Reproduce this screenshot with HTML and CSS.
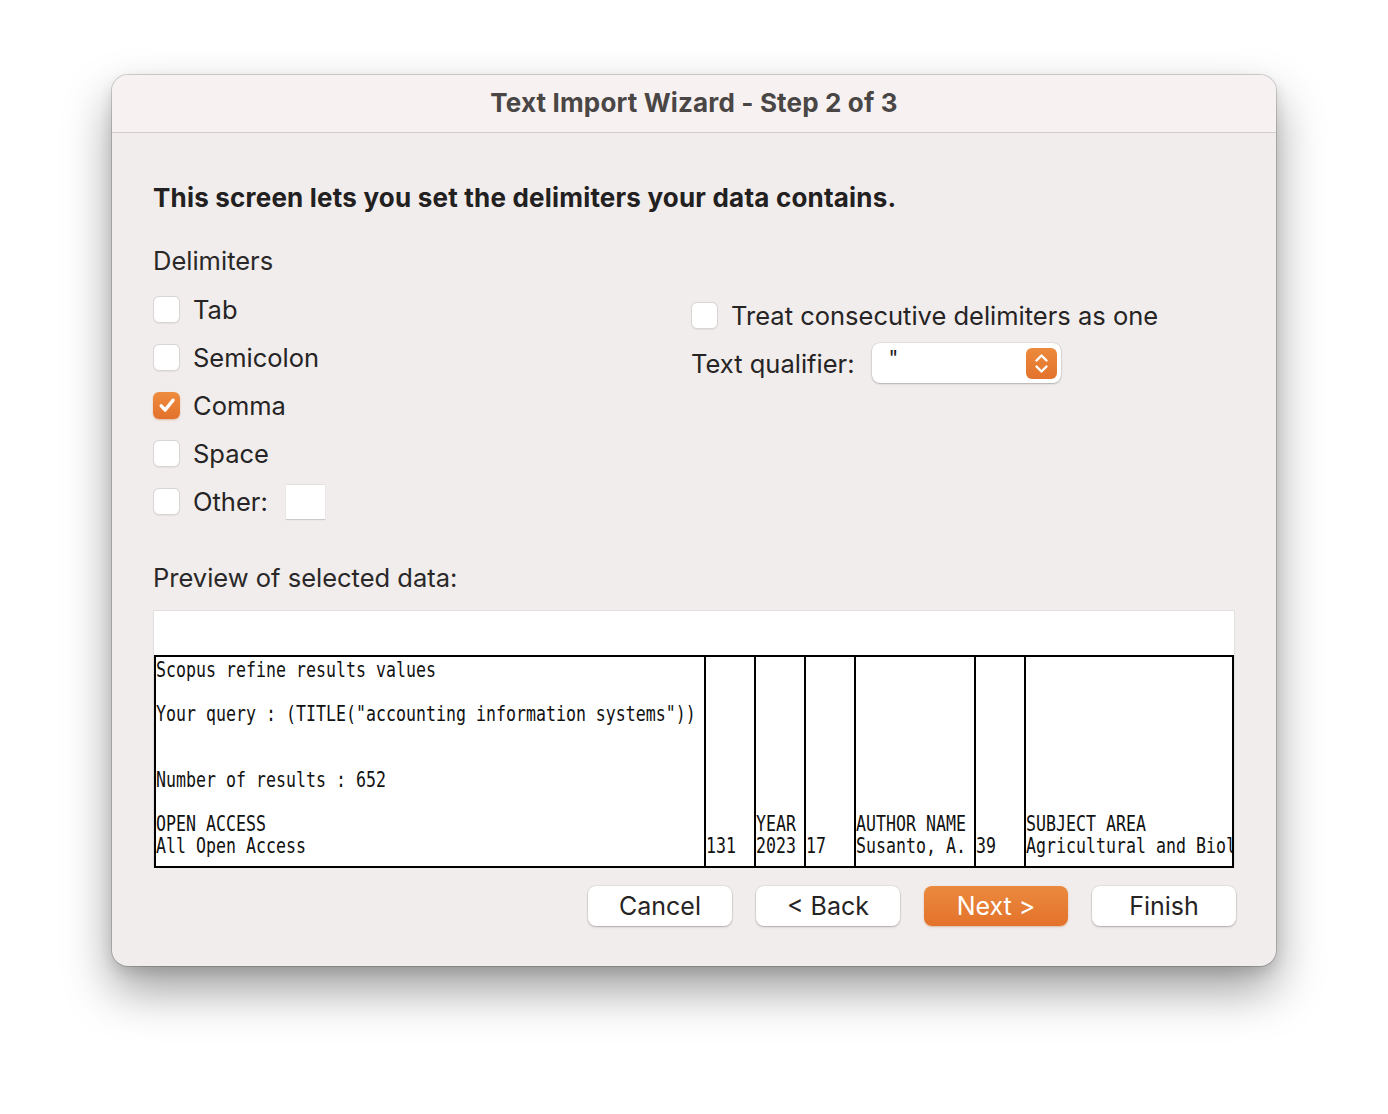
FILE: index.html
```html
<!DOCTYPE html>
<html>
<head>
<meta charset="utf-8">
<link rel="stylesheet" href="styles.css">
</head>
<body>
<div class="window">
  <div class="titlebar">Text Import Wizard - Step 2 of 3</div>
  <div class="content">
    <div class="heading">This screen lets you set the delimiters your data contains.</div>
    <div class="section-label">Delimiters</div>
    <div class="options">
      <div class="col-left">
        <div class="row"><span class="check"></span><span class="label">Tab</span></div>
        <div class="row"><span class="check"></span><span class="label">Semicolon</span></div>
        <div class="row"><span class="check checked"><svg viewBox="0 0 26 26" width="26" height="26"><path d="M7.2 13.8 L11.2 18 L19 8.2" fill="none" stroke="#fff" stroke-width="3.4" stroke-linecap="round" stroke-linejoin="round"/></svg></span><span class="label">Comma</span></div>
        <div class="row"><span class="check"></span><span class="label">Space</span></div>
        <div class="row"><span class="check"></span><span class="label">Other:</span><span class="other-input"></span></div>
      </div>
      <div class="col-right">
        <div class="row"><span class="check"></span><span class="label">Treat consecutive delimiters as one</span></div>
        <div class="row"><span class="qual-label">Text qualifier:</span>
          <span class="select"><span class="select-value">"</span><span class="stepper"><svg viewBox="0 0 31 31" width="31" height="31"><path d="M10.5 12.5 L15.5 7.5 L20.5 12.5 M10.5 18.5 L15.5 23.5 L20.5 18.5" fill="none" stroke="#fff" stroke-width="2.4" stroke-linecap="round" stroke-linejoin="round"/></svg></span></span>
        </div>
      </div>
    </div>
    <div class="section-label preview-label">Preview of selected data:</div>
    <div class="preview">
      <div class="preview-top"></div>
      <div class="grid">
        <div class="gcol c1">
          <div class="ln"><span>Scopus refine results values</span></div>
          <div class="ln"></div>
          <div class="ln"><span>Your query : (TITLE("accounting information systems"))</span></div>
          <div class="ln"></div>
          <div class="ln"></div>
          <div class="ln"><span>Number of results : 652</span></div>
          <div class="ln"></div>
          <div class="ln"><span>OPEN ACCESS</span></div>
          <div class="ln"><span>All Open Access</span></div>
        </div>
        <div class="gcol c2">
          <div class="ln"></div><div class="ln"></div><div class="ln"></div><div class="ln"></div><div class="ln"></div><div class="ln"></div><div class="ln"></div><div class="ln"></div>
          <div class="ln"><span>131</span></div>
        </div>
        <div class="gcol c3">
          <div class="ln"></div><div class="ln"></div><div class="ln"></div><div class="ln"></div><div class="ln"></div><div class="ln"></div><div class="ln"></div>
          <div class="ln"><span>YEAR</span></div>
          <div class="ln"><span>2023</span></div>
        </div>
        <div class="gcol c4">
          <div class="ln"></div><div class="ln"></div><div class="ln"></div><div class="ln"></div><div class="ln"></div><div class="ln"></div><div class="ln"></div><div class="ln"></div>
          <div class="ln"><span>17</span></div>
        </div>
        <div class="gcol c5">
          <div class="ln"></div><div class="ln"></div><div class="ln"></div><div class="ln"></div><div class="ln"></div><div class="ln"></div><div class="ln"></div>
          <div class="ln"><span>AUTHOR NAME</span></div>
          <div class="ln"><span>Susanto, A.</span></div>
        </div>
        <div class="gcol c6">
          <div class="ln"></div><div class="ln"></div><div class="ln"></div><div class="ln"></div><div class="ln"></div><div class="ln"></div><div class="ln"></div><div class="ln"></div>
          <div class="ln"><span>39</span></div>
        </div>
        <div class="gcol c7">
          <div class="ln"></div><div class="ln"></div><div class="ln"></div><div class="ln"></div><div class="ln"></div><div class="ln"></div><div class="ln"></div>
          <div class="ln"><span>SUBJECT AREA</span></div>
          <div class="ln"><span>Agricultural and Biol</span></div>
        </div>
      </div>
    </div>
    <div class="buttons">
      <button class="btn">Cancel</button>
      <button class="btn">&lt; Back</button>
      <button class="btn primary">Next &gt;</button>
      <button class="btn">Finish</button>
    </div>
  </div>
</div>
</body>
</html>
```

FILE: styles.css
```css
* { box-sizing: border-box; }
html, body { margin: 0; padding: 0; background: #ffffff; }
body {
  font-family: Inter, "Liberation Sans", sans-serif;
  color: #262424;
  min-height: 1114px;
  padding-top: 75px;
}
.window {
  margin: 0 0 0 112px;
  width: 1164px;
  height: 891px;
  border-radius: 16px;
  background: #f1edec;
  box-shadow: 0 0 0 1px rgba(0,0,0,0.16), 0 24px 48px rgba(0,0,0,0.38), 0 6px 14px rgba(0,0,0,0.12);
  overflow: hidden;
}
.titlebar {
  height: 58px;
  background: #f7f2f1;
  border-bottom: 1px solid #d3cecd;
  text-align: center;
  line-height: 56px;
  font-size: 26px;
  font-weight: 700;
  color: #4b4646;
  letter-spacing: 0.15px;
}
.content {
  padding: 49px 40px 0 41px;
}
.heading {
  font-size: 26px;
  font-weight: 700;
  line-height: 32px;
  letter-spacing: 0.2px;
  color: #222020;
}
.section-label {
  font-size: 25.5px;
  line-height: 32px;
  margin-top: 31px;
  color: #2a2828;
}
.options {
  display: flex;
  margin-top: 8px;
}
.col-left { width: 538px; }
.col-right { margin-top: 6px; }
.row {
  height: 48px;
  display: flex;
  align-items: center;
}
.check {
  width: 27px;
  height: 27px;
  border-radius: 6px;
  background: #ffffff;
  border: 1px solid #d9d5d4;
  box-shadow: 0 0.5px 1px rgba(0,0,0,0.06);
  flex: none;
  display: flex;
  align-items: center;
  justify-content: center;
}
.check.checked {
  border: none;
  background: linear-gradient(#ee8c3e, #e3712c);
  box-shadow: 0 1px 2px rgba(200,90,20,0.35);
}
.label {
  font-size: 25.5px;
  margin-left: 13px;
  color: #262424;
}
.other-input {
  width: 39px;
  height: 35px;
  background: #ffffff;
  margin-left: 18px;
  border-top: 1px solid #e2dfde;
  box-shadow: 0 1px 1px rgba(0,0,0,0.15);
}
.qual-label {
  font-size: 25.5px;
  color: #262424;
}
.select {
  margin-left: 18px;
  width: 189px;
  height: 40px;
  background: #ffffff;
  border-radius: 8px;
  box-shadow: 0 0 0 0.5px rgba(0,0,0,0.12), 0 1px 2px rgba(0,0,0,0.22);
  display: flex;
  align-items: center;
  justify-content: space-between;
  padding: 0 4px 0 16px;
}
.select-value {
  font-size: 21px;
  line-height: 20px;
  margin-top: -8px;
  color: #222;
}
.stepper {
  width: 31px;
  height: 31px;
  border-radius: 6px;
  background: linear-gradient(#ec8a3c, #e3722c);
  display: flex;
}
.preview-label { margin-top: 37px; }
.preview {
  margin-top: 16px;
  width: 1082px;
  background: #ffffff;
  border: 1px solid #e2e0df;
  border-bottom: none;
}
.preview-top { height: 44px; }
.grid {
  display: flex;
  border: 2px solid #000;
  border-left: none;
  height: 213px;
  font-family: "DejaVu Sans Mono", "Liberation Mono", monospace;
  font-size: 20.5px;
  color: #111;
}
.gcol {
  border-left: 2px solid #000;
  padding-top: 2px;
  overflow: hidden;
  flex: none;
}
.c1 { width: 550px; }
.c2, .c3, .c4, .c6 { width: 50px; }
.c5 { width: 120px; }
.c7 { flex: 1; }
.ln {
  height: 22px;
  line-height: 22px;
  white-space: pre;
}
.ln span {
  display: inline-block;
  transform: scaleX(0.81);
  transform-origin: 0 50%;
}
.buttons {
  display: flex;
  justify-content: flex-end;
  gap: 24px;
  margin-top: 18px;
  width: 1083px;
}
.btn {
  width: 144px;
  height: 40px;
  border: none;
  border-radius: 8px;
  background: #ffffff;
  box-shadow: 0 0 0 0.5px rgba(0,0,0,0.1), 0 1px 2px rgba(0,0,0,0.25);
  font-family: Inter, "Liberation Sans", sans-serif;
  font-size: 25px;
  color: #262424;
  padding: 0;
}
.btn.primary {
  background: linear-gradient(#ea8a3e, #e4722b);
  color: #ffffff;
  box-shadow: 0 1px 2px rgba(160,70,10,0.3);
}
```
